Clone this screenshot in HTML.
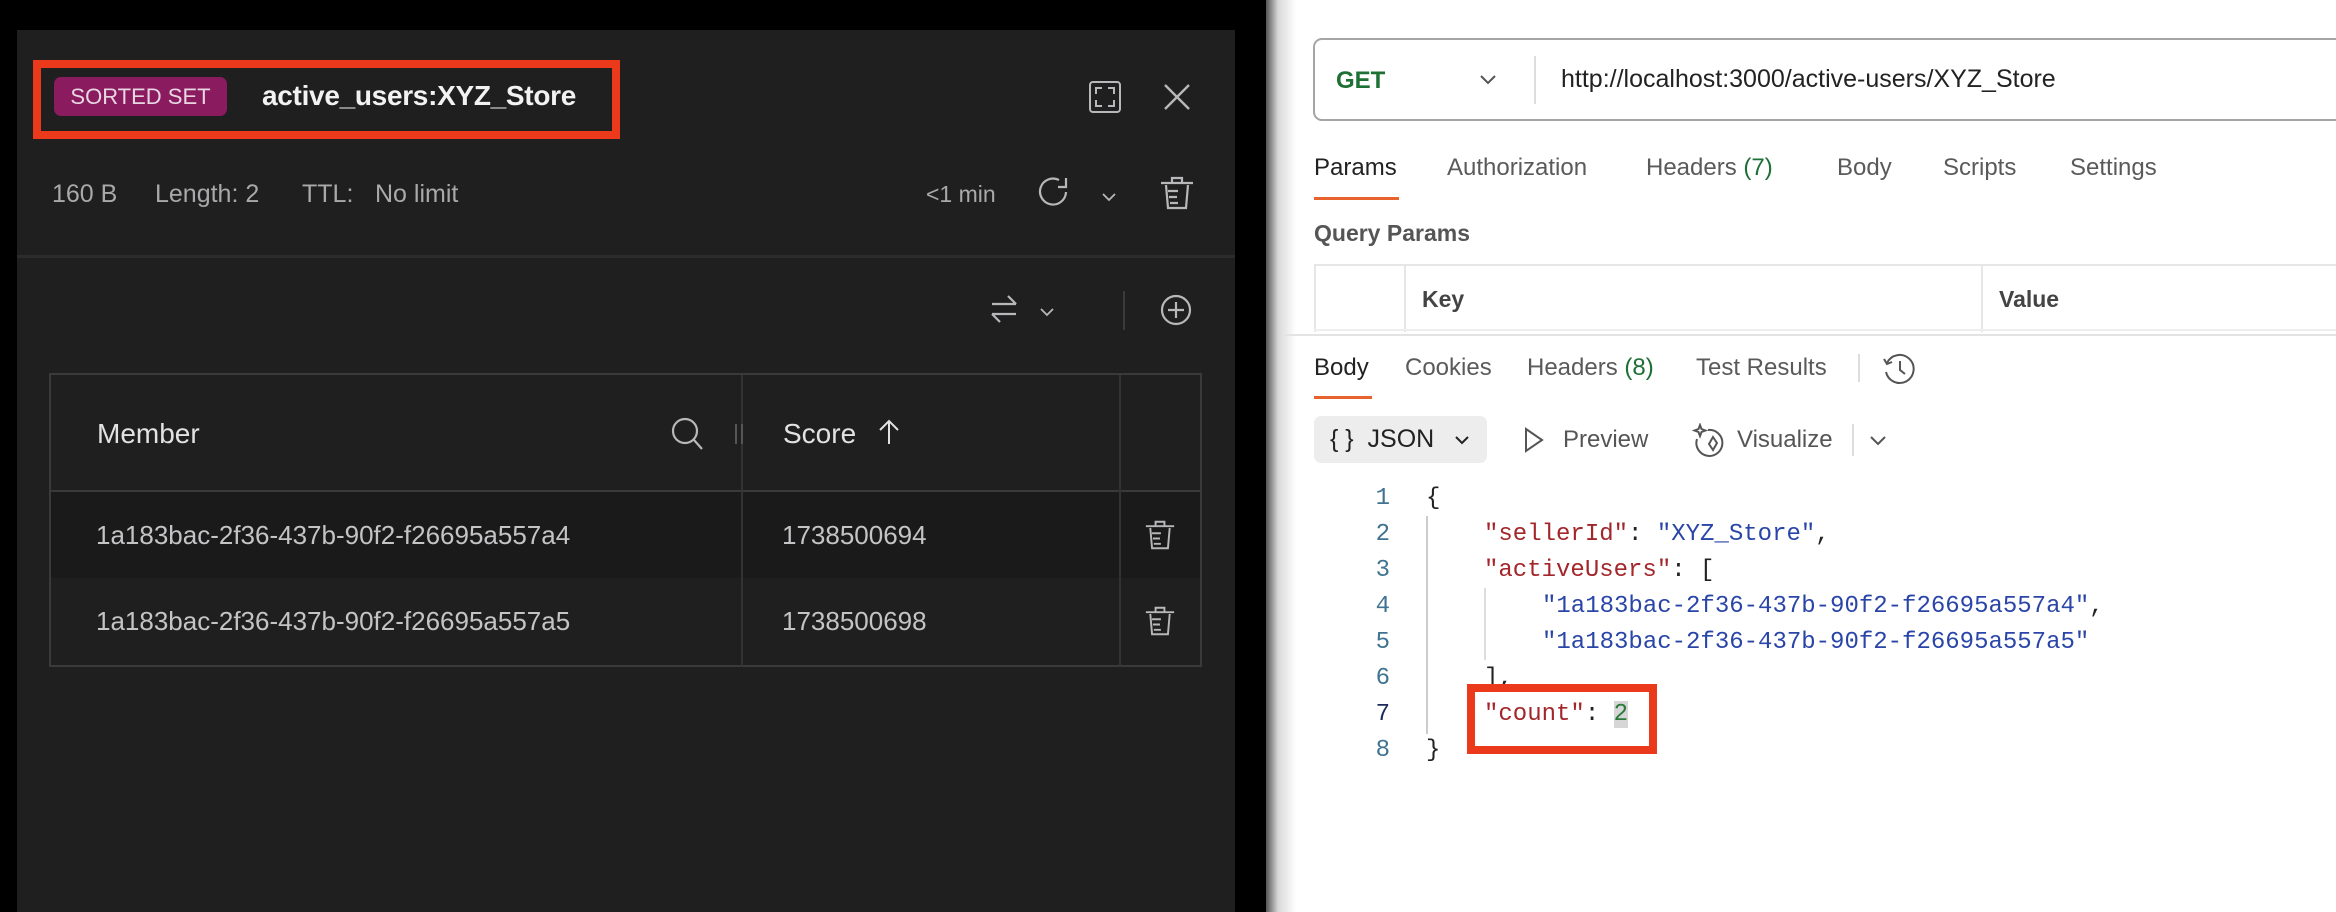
<!DOCTYPE html>
<html><head><meta charset="utf-8"><style>
*{margin:0;padding:0;box-sizing:border-box}
body{width:2336px;height:912px;overflow:hidden;background:#000;position:relative;font-family:"Liberation Sans",sans-serif}
.a{position:absolute;white-space:nowrap}
#L{position:absolute;left:17px;top:30px;width:1218px;height:882px;background:#1f1f1f}
#R{position:absolute;left:1266px;top:0;width:1070px;height:912px;background:#fff}
#grad{position:absolute;left:1266px;top:0;width:30px;height:912px;background:linear-gradient(90deg,#555,#d8d8d8 40%,#fff)}
.g{color:#a9a9ab;font-size:25px}
.mono{font-family:"Liberation Mono",monospace;font-size:24px}
.ln{color:#3f7391;width:40px;text-align:right}
.k{color:#a3262b}.s{color:#2a45a8}
.tab{color:#5a5a5a;font-size:24px}
</style></head><body>
<div id="L"></div>
<div class="a" style="left:33px;top:60px;width:587px;height:79px;border:8px solid #ea3a1b"></div>
<div class="a" style="left:54px;top:77px;width:173px;height:39px;background:#8a1b5e;border-radius:7px;color:#e8d6e2;font-size:22px;line-height:39px;text-align:center">SORTED SET</div>
<div class="a" style="left:262px;top:80px;color:#f2f2f2;font-size:28px;font-weight:bold;letter-spacing:-0.3px">active_users:XYZ_Store</div>
<svg class="a" style="left:1089px;top:81px" width="32" height="32" viewBox="0 0 32 32" fill="none" stroke="#b8b8ba" stroke-width="2"><rect x="1" y="1" width="30" height="30" rx="3"/><path d="M7 13V7h6M19 7h6v6M25 19v6h-6M13 25H7v-6"/></svg>
<svg class="a" style="left:1163px;top:83px" width="28" height="28" viewBox="0 0 28 28" stroke="#b8b8ba" stroke-width="2.4"><path d="M2 2L26 26M26 2L2 26"/></svg>
<div class="a g" style="left:52px;top:180px">160 B</div>
<div class="a g" style="left:155px;top:180px">Length: 2</div>
<div class="a g" style="left:302px;top:180px">TTL:</div>
<div class="a g" style="left:375px;top:180px">No limit</div>
<div class="a g" style="left:926px;top:181px;font-size:23px">&lt;1 min</div>
<svg class="a" style="left:1038px;top:176px" width="32" height="32" viewBox="0 0 32 32" fill="none" stroke="#b8b8ba" stroke-width="2.2"><path d="M21 4A13 13 0 1 0 28 16"/><path d="M28 2v9h-8"/></svg>
<svg class="a" style="left:1102px;top:192px" width="14" height="10" viewBox="0 0 14 10" fill="none" stroke="#b8b8ba" stroke-width="1.8"><path d="M1 2l6 6 6-6"/></svg>
<svg class="a" style="left:1160px;top:176px" width="34" height="34" viewBox="0 0 34 34" fill="none" stroke="#b8b8ba" stroke-width="2.2"><path d="M1 7h32M12 7V2h10v5M6 9l2 23h18l2-23M8 15h10M9 21h8M10 27h8"/></svg>
<div class="a" style="left:17px;top:255px;width:1218px;height:3px;background:#2c2c2c"></div>
<svg class="a" style="left:990px;top:292px" width="28" height="34" viewBox="0 0 28 34" fill="none" stroke="#b8b8ba" stroke-width="2.2"><path d="M2 12h24M18 4l8 8M26 22H2M10 30l-8-8"/></svg>
<svg class="a" style="left:1040px;top:307px" width="14" height="10" viewBox="0 0 14 10" fill="none" stroke="#b8b8ba" stroke-width="1.8"><path d="M1 2l6 6 6-6"/></svg>
<div class="a" style="left:1123px;top:291px;width:2px;height:39px;background:#3a3a3a"></div>
<svg class="a" style="left:1160px;top:294px" width="32" height="32" viewBox="0 0 32 32" fill="none" stroke="#b8b8ba" stroke-width="2.2"><circle cx="16" cy="16" r="14"/><path d="M16 8v16M8 16h16"/></svg>
<div class="a" style="left:49px;top:373px;width:1153px;height:294px;border:2px solid #3a3a3a"></div>
<div class="a" style="left:51px;top:491px;width:1149px;height:87px;background:#1a1a1a"></div>
<div class="a" style="left:51px;top:490px;width:1149px;height:2px;background:#3a3a3a"></div>
<div class="a" style="left:741px;top:375px;width:2px;height:291px;background:#333"></div>
<div class="a" style="left:1119px;top:375px;width:2px;height:291px;background:#333"></div>
<div class="a" style="left:97px;top:418px;color:#e2e2e2;font-size:28px">Member</div>
<svg class="a" style="left:671px;top:417px" width="34" height="34" viewBox="0 0 34 34" fill="none" stroke="#b8b8ba" stroke-width="2.2"><circle cx="14" cy="14" r="12"/><path d="M23 23l8 9"/></svg>
<div class="a" style="left:735px;top:424px;width:2px;height:20px;background:#555"></div>
<div class="a" style="left:741px;top:424px;width:2px;height:20px;background:#555"></div>
<div class="a" style="left:783px;top:418px;color:#e2e2e2;font-size:28px">Score</div>
<svg class="a" style="left:878px;top:419px" width="22" height="26" viewBox="0 0 22 26" fill="none" stroke="#e2e2e2" stroke-width="2"><path d="M11 25V2M2 11l9-9 9 9"/></svg>
<div class="a" style="left:96px;top:520px;color:#c4c4c6;font-size:26px">1a183bac-2f36-437b-90f2-f26695a557a4</div>
<div class="a" style="left:782px;top:520px;color:#c4c4c6;font-size:26px">1738500694</div>
<div class="a" style="left:96px;top:606px;color:#c4c4c6;font-size:26px">1a183bac-2f36-437b-90f2-f26695a557a5</div>
<div class="a" style="left:782px;top:606px;color:#c4c4c6;font-size:26px">1738500698</div>
<svg class="a" style="left:1145px;top:518px" width="30" height="34" viewBox="0 0 34 34" fill="none" stroke="#b8b8ba" stroke-width="2.2"><path d="M1 7h32M12 7V2h10v5M6 9l2 23h18l2-23M8 15h10M9 21h8M10 27h8"/></svg>
<svg class="a" style="left:1145px;top:604px" width="30" height="34" viewBox="0 0 34 34" fill="none" stroke="#b8b8ba" stroke-width="2.2"><path d="M1 7h32M12 7V2h10v5M6 9l2 23h18l2-23M8 15h10M9 21h8M10 27h8"/></svg>

<div id="R"></div><div id="grad"></div>
<div class="a" style="left:1313px;top:38px;width:1100px;height:83px;border:2px solid #a5a5a5;border-radius:9px"></div>
<div class="a" style="left:1336px;top:67px;color:#1e7034;font-size:24px;font-weight:bold">GET</div>
<svg class="a" style="left:1480px;top:75px" width="16" height="10" viewBox="0 0 16 10" fill="none" stroke="#555" stroke-width="2"><path d="M1 1l7 7 7-7"/></svg>
<div class="a" style="left:1534px;top:56px;width:2px;height:48px;background:#ddd"></div>
<div class="a" style="left:1561px;top:65px;color:#222;font-size:25px">http://localhost:3000/active-users/XYZ_Store</div>
<div class="a tab" style="left:1314px;top:154px;color:#222">Params</div>
<div class="a tab" style="left:1447px;top:154px">Authorization</div>
<div class="a tab" style="left:1646px;top:154px">Headers <span style="color:#1e7034">(7)</span></div>
<div class="a tab" style="left:1837px;top:154px">Body</div>
<div class="a tab" style="left:1943px;top:154px">Scripts</div>
<div class="a tab" style="left:2070px;top:154px">Settings</div>
<div class="a" style="left:1314px;top:197px;width:85px;height:3px;background:#e8622d"></div>
<div class="a" style="left:1314px;top:220px;color:#555;font-size:23px;font-weight:bold">Query Params</div>
<div class="a" style="left:1314px;top:264px;width:1030px;height:68px;border:2px solid #e6e6e6;border-right:none;border-bottom:none"></div>
<div class="a" style="left:1404px;top:266px;width:2px;height:66px;background:#e6e6e6"></div>
<div class="a" style="left:1981px;top:266px;width:2px;height:66px;background:#e6e6e6"></div>
<div class="a" style="left:1314px;top:329px;width:1030px;height:2px;background:#eee"></div>
<div class="a" style="left:1422px;top:286px;color:#444;font-size:23px;font-weight:bold">Key</div>
<div class="a" style="left:1999px;top:286px;color:#444;font-size:23px;font-weight:bold">Value</div>
<div class="a" style="left:1282px;top:334px;width:1060px;height:2px;background:#e3e3e3"></div>
<div class="a tab" style="left:1314px;top:354px;color:#222">Body</div>
<div class="a tab" style="left:1405px;top:354px">Cookies</div>
<div class="a tab" style="left:1527px;top:354px">Headers <span style="color:#1e7034">(8)</span></div>
<div class="a tab" style="left:1696px;top:354px">Test Results</div>
<div class="a" style="left:1858px;top:354px;width:2px;height:28px;background:#ddd"></div>
<svg class="a" style="left:1882px;top:353px" width="34" height="32" viewBox="0 0 34 32" fill="none" stroke="#555" stroke-width="2"><path d="M5 10A14 14 0 1 1 4 19"/><path d="M2 6l3 5 5-2M18 8v9l5 4"/></svg>
<div class="a" style="left:1314px;top:396px;width:58px;height:3px;background:#e8622d"></div>
<div class="a" style="left:1314px;top:416px;width:173px;height:47px;background:#ededed;border-radius:7px"></div>
<div class="a" style="left:1330px;top:425px;color:#222;font-size:25px">{ }&nbsp; JSON</div>
<svg class="a" style="left:1455px;top:436px" width="14" height="9" viewBox="0 0 14 9" fill="none" stroke="#222" stroke-width="2"><path d="M1 1l6 6 6-6"/></svg>
<svg class="a" style="left:1524px;top:427px" width="20" height="26" viewBox="0 0 20 26" fill="none" stroke="#555" stroke-width="2"><path d="M2 2l16 11L2 24z"/></svg>
<div class="a" style="left:1563px;top:426px;color:#555;font-size:24px">Preview</div>
<svg class="a" style="left:1692px;top:423px" width="34" height="34" viewBox="0 0 34 34" fill="none" stroke="#555" stroke-width="2"><path d="M8 2l1.5 4 4 1.5-4 1.5L8 13l-1.5-4-4-1.5 4-1.5z"/><path d="M16 7a13 13 0 1 1-11 9"/><path d="M21 14l-4 7 4 6 4-7z"/></svg>
<div class="a" style="left:1737px;top:426px;color:#555;font-size:24px">Visualize</div>
<div class="a" style="left:1852px;top:424px;width:2px;height:32px;background:#ddd"></div>
<svg class="a" style="left:1870px;top:436px" width="16" height="10" viewBox="0 0 16 10" fill="none" stroke="#555" stroke-width="2"><path d="M1 1l7 7 7-7"/></svg>
<div class="a" style="left:1426px;top:516px;width:2px;height:218px;background:#ccc"></div>
<div class="a" style="left:1484px;top:588px;width:2px;height:72px;background:#ddd"></div>
<div class="a mono ln" style="left:1350px;top:485px">1</div>
<div class="a mono ln" style="left:1350px;top:521px">2</div>
<div class="a mono ln" style="left:1350px;top:557px">3</div>
<div class="a mono ln" style="left:1350px;top:593px">4</div>
<div class="a mono ln" style="left:1350px;top:629px">5</div>
<div class="a mono ln" style="left:1350px;top:665px">6</div>
<div class="a mono ln" style="left:1350px;top:701px;color:#1a2a5a">7</div>
<div class="a mono ln" style="left:1350px;top:737px">8</div>
<div class="a mono" style="left:1426px;top:485px;color:#222">{</div>
<div class="a mono" style="left:1484px;top:521px;color:#222"><span class="k">"sellerId"</span>: <span class="s">"XYZ_Store"</span>,</div>
<div class="a mono" style="left:1484px;top:557px;color:#222"><span class="k">"activeUsers"</span>: [</div>
<div class="a mono s" style="left:1542px;top:593px">"1a183bac-2f36-437b-90f2-f26695a557a4"<span style="color:#222">,</span></div>
<div class="a mono s" style="left:1542px;top:629px">"1a183bac-2f36-437b-90f2-f26695a557a5"</div>
<div class="a mono" style="left:1484px;top:665px;color:#222">],</div>
<div class="a mono" style="left:1484px;top:701px;color:#222"><span class="k">"count"</span>: <span style="color:#2b7a3b;background:#d6d6d6">2</span></div>
<div class="a mono" style="left:1426px;top:737px;color:#222">}</div>
<div class="a" style="left:1467px;top:684px;width:190px;height:70px;border:8px solid #ea3a1b"></div>
</body></html>
